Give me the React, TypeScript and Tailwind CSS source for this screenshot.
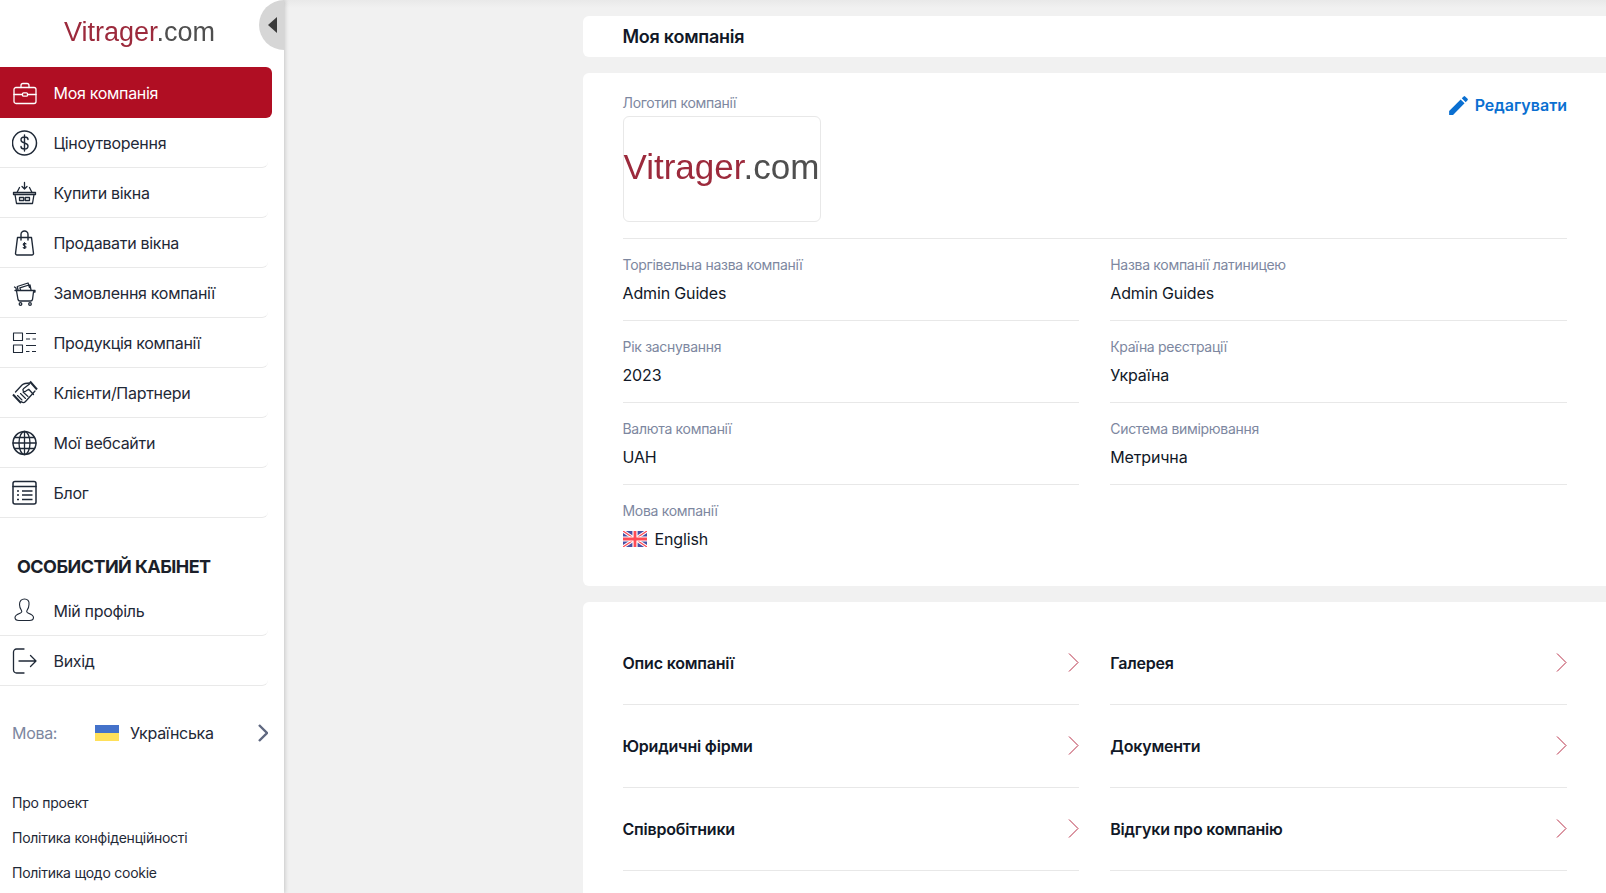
import { ReactNode } from 'react';
import { MdEdit } from 'react-icons/md';

const ink = '#1f2937';

function Icon({ children, color = ink }: { children: ReactNode; color?: string }) {
  return (
    <svg width="26" height="26" viewBox="0 0 26 26" fill="none" stroke={color} strokeWidth="1.3" strokeLinecap="round" strokeLinejoin="round">
      {children}
    </svg>
  );
}

const icons: Record<string, ReactNode> = {
  briefcase: (
    <Icon color="#ffffff">
      <path d="M4 7.500h18a2 2 0 0 1 2 2v12a2 2 0 0 1-2 2H4a2 2 0 0 1-2-2v-12a2 2 0 0 1 2-2z" />
      <path d="M9 7.500V5.500a2 2 0 0 1 2-2h4a2 2 0 0 1 2 2v2" />
      <path d="M2 14.500h8.500M15.500 14.500H24" />
      <rect x="10.500" y="12.800" width="5" height="3.400" rx="1" />
    </Icon>
  ),
  dollar: (
    <Icon>
      <circle cx="12.500" cy="13" r="12" strokeWidth="1.500" />
      <path d="M16 9.500c0-1.500-1.500-2.500-3.500-2.500S9 8 9 10c0 4 7 2 7 6 0 2-1.500 3-3.500 3S9 18 9 16.500M12.500 5v16" strokeWidth="1.400" />
    </Icon>
  ),
  basket: (
    <Icon>
      <path d="M1.500 12.500h22v2h-22z" />
      <path d="M3 14.500l1.500 9h16l1.500-9" />
      <path d="M5 12.500l2.500-5M20 12.500l-2.500-5M12.500 2.500v6M10 6.500l2.500 2.500L15 6.500M7.500 17.500h4.200v3H7.500zM13.300 17.500h4.200v3h-4.200z" />
    </Icon>
  ),
  bag: (
    <Icon>
      <path d="M5.500 7.500h14l2 16a1.500 1.500 0 0 1-1.500 1.500H5a1.500 1.500 0 0 1-1.500-1.500z" strokeWidth="1.400" />
      <path d="M9 10V4.500a3.500 3.500 0 0 1 7 0V10" strokeWidth="1.400" />
      <path d="M14 14c-.3-.8-2.800-1-2.800.5 0 1.500 2.800 1 2.800 2.500 0 1.500-2.500 1.300-2.800.5M12.500 12.500v6" strokeWidth="1.100" />
    </Icon>
  ),
  cart: (
    <Icon>
      <path d="M3 10.500h20v1.500h-1.500l-1 7.500a2 2 0 0 1-2 1.500H8a2 2 0 0 1-2-1.500L4 8 2.500 7" />
      <path d="M6 10l-.7-3.500L16 3l1.500 4.500M8.500 10l-.6-2.200 9-2.800M19 10l-1-5" />
      <circle cx="8.500" cy="24" r="1.300" />
      <circle cx="18" cy="24" r="1.300" />
    </Icon>
  ),
  products: (
    <Icon>
      <rect x="1.500" y="3" width="9" height="7.500" strokeWidth="1.100" />
      <rect x="1.500" y="15" width="9" height="7.500" strokeWidth="1.100" />
      <path d="M14 3.500h10M14 9h4M20.500 9H24M14 15.500h10M14 21.500h3.500M20 21.500h4" strokeWidth="1.100" strokeLinecap="butt" />
    </Icon>
  ),
  handshake: (
    <Icon>
      <path d="M1 14.500l8 8.500M18 1.500l7 8" strokeWidth="2" strokeLinecap="butt" />
      <path d="M3.500 12L10 5c2-1.800 4.500-2 8-2" />
      <path d="M23 11l-9.500 10.500c-1.200 1.300-2.800 1.300-4 .2" />
      <path d="M17.500 4l-5.800 4.500c-1.800 1.500-.2 3.800 1.800 2.800l3.200-2 4.800 5.200" />
      <path d="M5.500 15.500l4.500 4.500M8.500 13.500l5 5M11 12l5 4.500" strokeWidth="1.100" />
    </Icon>
  ),
  globe: (
    <Icon>
      <circle cx="12.500" cy="13" r="11.500" strokeWidth="1.500" />
      <ellipse cx="12.500" cy="13" rx="5.500" ry="11.500" />
      <path d="M12.500 1.500v23M1 13h23M2.700 7.500h19.600M2.700 18.500h19.600" />
    </Icon>
  ),
  blog: (
    <Icon>
      <rect x="1" y="1.500" width="23" height="22.500" rx="2" strokeWidth="1.500" />
      <path d="M1 6.500h23" strokeWidth="1.500" />
      <path d="M5 11h2M10 11h10.500M5 15h2M10 15h10.500M5 19.500h2M10 19.500h10.500" strokeWidth="1.500" strokeLinecap="butt" />
    </Icon>
  ),
  user: (
    <Icon>
      <path d="M12.500 1c-3 0-5 2-5 5.500 0 2.500 1 4.500 2 6 .5 1 .3 2-1 2.500-2.500 1-5.500 2-5.500 4.500 0 2 2 3 4 3h10.500c2 0 4-1 4-3 0-2.500-3-3.500-5.500-4.500-1.300-.5-1.500-1.500-1-2.500 1-1.500 2-3.500 2-6C17.500 3 15.500 1 12.500 1z" strokeWidth="1.100" />
    </Icon>
  ),
  logout: (
    <Icon>
      <path d="M12 1H4.500a3 3 0 0 0-3 3v18a3 3 0 0 0 3 3H12" strokeWidth="1.300" />
      <path d="M7 13h17M18.500 7.500L24 13l-5.500 5.500" strokeWidth="1.300" />
    </Icon>
  ),
};

const mainMenu = [
  ['dollar', 'Ціноутворення'],
  ['basket', 'Купити вікна'],
  ['bag', 'Продавати вікна'],
  ['cart', 'Замовлення компанії'],
  ['products', 'Продукція компанії'],
  ['handshake', 'Клієнти/Партнери'],
  ['globe', 'Мої вебсайти'],
  ['blog', 'Блог'],
];

function MenuRow({ icon, label }: { icon: string; label: string }) {
  return (
    <div className="flex h-[50px] w-[268px] items-center gap-[15.500px] rounded-br-md border-b border-[#e9e9e9] pl-[12px] text-[16px] tracking-[-0.3px] text-[#1f2937]">
      <span className="flex w-[26px] justify-center">{icons[icon]}</span>
      <span>{label}</span>
    </div>
  );
}

function Field({ label, value, last }: { label: string; value: ReactNode; last?: boolean }) {
  return (
    <div className={`h-[82px] pt-[16px] ${last ? '' : 'border-b border-[#e8e8e8]'}`}>
      <div className="text-[14px] leading-5 tracking-[-0.3px] text-[#7d87a0]">{label}</div>
      <div className="mt-[6px] text-[16px] leading-6 tracking-[-0.15px] text-[#111827]">{value}</div>
    </div>
  );
}

function SectionLink({ label }: { label: string }) {
  return (
    <div className="flex h-[83px] items-center justify-between border-b border-[#e8e8e8] pb-px">
      <span className="text-[16px] font-semibold tracking-[-0.2px] text-[#111827]">{label}</span>
      <svg width="11" height="19" viewBox="0 0 11 19" fill="none" stroke="#b83048" strokeWidth="1">
        <path d="M1 .5l9 9-9 9" />
      </svg>
    </div>
  );
}

function Logo({ className }: { className: string }) {
  return (
    <span className={`font-['Liberation_Sans',sans-serif] leading-none whitespace-nowrap blur-[0.4px] ${className}`}>
      <span className="text-[#9c2a3c]">Vitrager</span>
      <span className="text-[#4f4f4f]">.com</span>
    </span>
  );
}

export default function App() {
  return (
    <div className="flex h-[893px] w-full overflow-hidden bg-[#f1f1f1] font-['Inter',sans-serif]">
      {/* Sidebar */}
      <aside className="relative h-full w-[284px] shrink-0 bg-white shadow-[1px_0_4px_rgba(0,0,0,0.18)]">
        <div className="flex h-[67px] items-start pl-[64px] pt-[19px]">
          <Logo className="text-[27px]" />
        </div>
        <div className="absolute right-0 top-0 flex h-[50px] w-[25px] items-center justify-end rounded-l-full bg-[#d6d6d6] pr-[7px]">
          <div className="h-0 w-0 border-y-[8px] border-r-[9px] border-y-transparent border-r-[#3a3a3a]" />
        </div>
        <div className="flex h-[51px] w-[272px] items-center gap-[15.500px] rounded-r-md bg-[#b00e23] pl-[12px] text-[16px] tracking-[-0.3px] text-white">
          <span className="flex w-[26px] justify-center">{icons.briefcase}</span>
          <span>Моя компанія</span>
        </div>
        {mainMenu.map(([icon, label]) => (
          <MenuRow key={label} icon={icon} label={label} />
        ))}
        <div className="mb-[7px] mt-[37px] pl-[17px] text-[18px] font-bold leading-6 tracking-[-0.55px] text-[#1b1f2a]">ОСОБИСТИЙ КАБІНЕТ</div>
        <MenuRow icon="user" label="Мій профіль" />
        <MenuRow icon="logout" label="Вихід" />
        <div className="ml-[12px] mt-[35px] flex h-6 w-[256px] items-center text-[16px] tracking-[-0.3px]">
          <span className="w-[83px] text-[#7d87a0]">Мова:</span>
          <svg width="24" height="16" viewBox="0 0 24 16">
            <rect width="24" height="8" fill="#4472ca" />
            <rect y="8" width="24" height="8" fill="#ffe05a" />
          </svg>
          <span className="ml-[11px] text-[#1f2937]">Українська</span>
          <svg className="ml-auto" width="10" height="18" viewBox="0 0 10 18" fill="none" stroke="#5f6880" strokeWidth="2.400">
            <path d="M1 1l8 8-8 8" />
          </svg>
        </div>
        <div className="ml-[12px] mt-[48px] flex flex-col gap-[15px] text-[14px] leading-5 tracking-[-0.25px] text-[#1f2937]">
          <span>Про проект</span>
          <span>Політика конфіденційності</span>
          <span>Політика щодо cookie</span>
        </div>
      </aside>

      {/* Main */}
      <main className="flex-1 bg-gradient-to-b from-[#e9e9e9] to-[#f1f1f1] to-[8px] pl-[299px] pt-[16px]">
        <div className="flex h-[41px] items-center rounded-l-md bg-white pl-[39.500px] text-[18px] font-semibold tracking-[-0.25px] text-[#111827]">
          Моя компанія
        </div>

        <div className="mt-[16px] rounded-l-md bg-white pb-[19px] pl-[39.500px] pr-[39px] pt-[20px]">
          <div className="flex justify-between border-b border-[#e8e8e8] pb-[16px]">
            <div>
              <div className="text-[14px] leading-5 tracking-[-0.3px] text-[#7d87a0]">Логотип компанії</div>
              <div className="mt-[3px] flex h-[106px] w-[198px] items-center rounded-md border border-[#e8e8e8] pb-[5px]">
                <Logo className="text-[35px]" />
              </div>
            </div>
            <div className="flex h-6 items-center gap-[4px] text-[16px] font-semibold text-[#0a6fd1]">
              <MdEdit size={25} />
              <span>Редагувати</span>
            </div>
          </div>
          <div className="grid grid-cols-2 gap-x-[31px]">
            <Field label="Торгівельна назва компанії" value="Admin Guides" />
            <Field label="Назва компанії латиницею" value="Admin Guides" />
            <Field label="Рік заснування" value="2023" />
            <Field label="Країна реєстрації" value="Україна" />
            <Field label="Валюта компанії" value="UAH" />
            <Field label="Система вимірювання" value="Метрична" />
            <Field
              last
              label="Мова компанії"
              value={
                <span className="flex items-center gap-[8px]">
                  <svg width="24" height="16" viewBox="0 0 60 40">
                    <rect width="60" height="40" fill="#4a4fa3" />
                    <path d="M0 0l60 40M60 0L0 40" stroke="#ffffff" strokeWidth="8" />
                    <path d="M0 0l60 40M60 0L0 40" stroke="#ff4b55" strokeWidth="3" />
                    <path d="M30 0v40M0 20h60" stroke="#ffffff" strokeWidth="13" />
                    <path d="M30 0v40M0 20h60" stroke="#ff4b55" strokeWidth="7" />
                  </svg>
                  English
                </span>
              }
            />
          </div>
        </div>

        <div className="mt-[16px] grid grid-cols-2 gap-x-[31px] rounded-l-md bg-white pb-[60px] pl-[39.500px] pr-[39px] pt-[20px]">
          <SectionLink label="Опис компанії" />
          <SectionLink label="Галерея" />
          <SectionLink label="Юридичні фірми" />
          <SectionLink label="Документи" />
          <SectionLink label="Співробітники" />
          <SectionLink label="Відгуки про компанію" />
        </div>
      </main>
    </div>
  );
}
